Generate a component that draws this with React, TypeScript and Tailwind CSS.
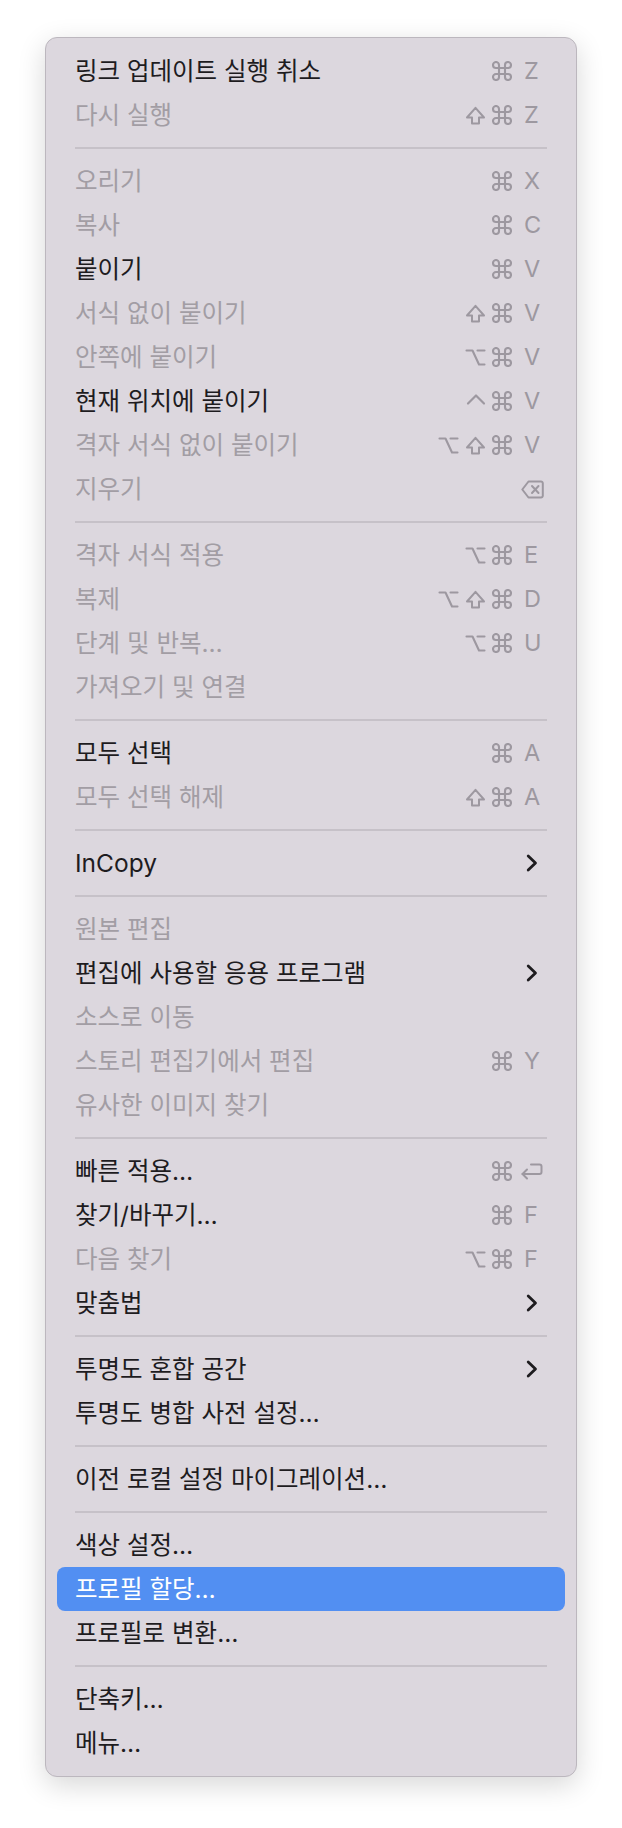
import React from "react";

type Key = "cmd" | "shift" | "opt" | "ctrl" | "del" | "ret" | string;

type Item =
  | { sep: true }
  | {
      sep?: false;
      label: string;
      off?: boolean;
      active?: boolean;
      mods?: Key[];
      k?: Key;
      sub?: boolean;
    };

const items: Item[] = [
  { label: "링크 업데이트 실행 취소", mods: ["cmd"], k: "Z" },
  { label: "다시 실행", off: true, mods: ["shift", "cmd"], k: "Z" },
  { sep: true },
  { label: "오리기", off: true, mods: ["cmd"], k: "X" },
  { label: "복사", off: true, mods: ["cmd"], k: "C" },
  { label: "붙이기", mods: ["cmd"], k: "V" },
  { label: "서식 없이 붙이기", off: true, mods: ["shift", "cmd"], k: "V" },
  { label: "안쪽에 붙이기", off: true, mods: ["opt", "cmd"], k: "V" },
  { label: "현재 위치에 붙이기", mods: ["ctrl", "cmd"], k: "V" },
  { label: "격자 서식 없이 붙이기", off: true, mods: ["opt", "shift", "cmd"], k: "V" },
  { label: "지우기", off: true, k: "del" },
  { sep: true },
  { label: "격자 서식 적용", off: true, mods: ["opt", "cmd"], k: "E" },
  { label: "복제", off: true, mods: ["opt", "shift", "cmd"], k: "D" },
  { label: "단계 및 반복…", off: true, mods: ["opt", "cmd"], k: "U" },
  { label: "가져오기 및 연결", off: true },
  { sep: true },
  { label: "모두 선택", mods: ["cmd"], k: "A" },
  { label: "모두 선택 해제", off: true, mods: ["shift", "cmd"], k: "A" },
  { sep: true },
  { label: "InCopy", sub: true },
  { sep: true },
  { label: "원본 편집", off: true },
  { label: "편집에 사용할 응용 프로그램", sub: true },
  { label: "소스로 이동", off: true },
  { label: "스토리 편집기에서 편집", off: true, mods: ["cmd"], k: "Y" },
  { label: "유사한 이미지 찾기", off: true },
  { sep: true },
  { label: "빠른 적용…", mods: ["cmd"], k: "ret" },
  { label: "찾기/바꾸기…", mods: ["cmd"], k: "F" },
  { label: "다음 찾기", off: true, mods: ["opt", "cmd"], k: "F" },
  { label: "맞춤법", sub: true },
  { sep: true },
  { label: "투명도 혼합 공간", sub: true },
  { label: "투명도 병합 사전 설정…" },
  { sep: true },
  { label: "이전 로컬 설정 마이그레이션…" },
  { sep: true },
  { label: "색상 설정…" },
  { label: "프로필 할당…", active: true },
  { label: "프로필로 변환…" },
  { sep: true },
  { label: "단축키…" },
  { label: "메뉴…" },
];

const line = {
  fill: "none",
  stroke: "currentColor",
  strokeLinecap: "round" as const,
  strokeLinejoin: "round" as const,
};

// modifier / key symbols drawn by hand so they keep the mac proportions
function Glyph({ name }: { name: Key }) {
  if (name === "cmd")
    return (
      <svg width="20" height="20" viewBox="2 2 20 20" strokeWidth="2.1" {...line}>
        <path d="M15 6v12a3 3 0 1 0 3-3H6a3 3 0 1 0 3 3V6a3 3 0 1 0-3 3h12a3 3 0 1 0-3-3" />
      </svg>
    );
  if (name === "shift")
    return (
      <svg width="21" height="19" viewBox="0 0 21 19" strokeWidth="2" {...line}>
        <path d="M7 17.5V11.5H2L10.5 1.8 19 11.5h-5v6H7z" />
      </svg>
    );
  if (name === "opt")
    return (
      <svg width="21" height="19" viewBox="0 0 21 19" strokeWidth="2.1" {...line}>
        <path d="M1.5 2.5h6l6.5 14h5.5" />
        <path d="M12.5 2.5h7" />
      </svg>
    );
  if (name === "ctrl")
    return (
      <svg width="20" height="19" viewBox="0 0 20 19" strokeWidth="2.2" {...line}>
        <path d="M2 11.5 10 3.5 18 11.5" />
      </svg>
    );
  if (name === "del")
    return (
      <svg width="23" height="19" viewBox="0 0 23 19" strokeWidth="2" {...line}>
        <path d="M7.5 1.5h12.5a1.8 1.8 0 0 1 1.8 1.8v12.4a1.8 1.8 0 0 1-1.8 1.8H7.5L1.3 9.5z" />
        <path d="m11 6 6.5 7" />
        <path d="m17.5 6-6.5 7" />
      </svg>
    );
  if (name === "ret")
    return (
      <svg width="23" height="19" viewBox="0 0 23 19" strokeWidth="2" {...line}>
        <path d="M11 2.5h8.5a2 2 0 0 1 2 2v5.5a2 2 0 0 1-2 2H2.5" />
        <path d="m7 7.5-4.5 4.5 4.5 4.5" />
      </svg>
    );
  return <span>{name}</span>;
}

export default function App() {
  return (
    <div className="min-h-screen bg-white pt-[37px] pl-[45px] pb-[54px]">
      <div
        className="w-[532px] rounded-[12px] border border-[#bcb7be] bg-[#dcd7de] px-[11px] py-[11px] shadow-[0_8px_28px_rgba(0,0,0,0.16)]"
        style={{ fontFamily: 'Inter, "Noto Sans CJK KR", sans-serif' }}
      >
        {items.map((it, i) =>
          it.sep ? (
            <div key={i} className="flex h-[22px] items-center px-[18px]">
              <div className="h-[2px] w-full bg-[#c6c1c8]" />
            </div>
          ) : (
            <div
              key={i}
              className={
                "flex h-[44px] items-center justify-between rounded-[8px] pl-[18px] pr-[23px] " +
                (it.active ? "bg-[#528ff2]" : "")
              }
            >
              <span
                className={
                  "text-[24.5px] leading-[44px] " +
                  (it.active ? "text-white" : it.off ? "text-[#a29da4]" : "text-[#1e1c1f]")
                }
              >
                {it.label}
              </span>
              {it.sub ? (
                <svg width="12" height="18" viewBox="0 0 12 18" className="mr-[4px] text-[#1e1c1f]">
                  <path
                    d="M2.2 2 9.5 9 2.2 16"
                    fill="none"
                    stroke="currentColor"
                    strokeWidth="2.8"
                    strokeLinecap="round"
                    strokeLinejoin="round"
                  />
                </svg>
              ) : it.k ? (
                <div className="flex items-center text-[#9d98a0]">
                  <div className="flex items-center gap-[6px]">
                    {(it.mods || []).map((m, j) => (
                      <Glyph key={j} name={m} />
                    ))}
                  </div>
                  <div className="ml-[12px] flex w-[18px] items-center text-[23.5px] leading-none">
                    {it.k === "del" ? (
                      <span className="-ml-[3px] -mr-[2px]">
                        <Glyph name="del" />
                      </span>
                    ) : it.k === "ret" ? (
                      <span className="-ml-[4px] -mr-[1px]">
                        <Glyph name="ret" />
                      </span>
                    ) : (
                      <span>{it.k}</span>
                    )}
                  </div>
                </div>
              ) : null}
            </div>
          )
        )}
      </div>
    </div>
  );
}
